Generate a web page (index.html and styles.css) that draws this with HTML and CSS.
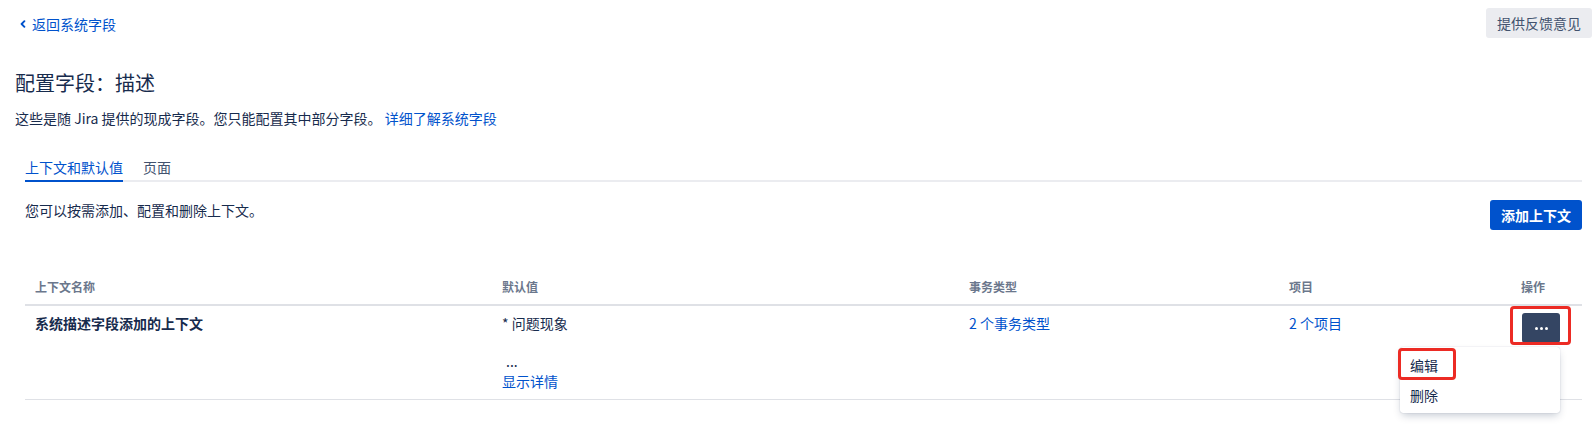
FILE: index.html
```html
<!DOCTYPE html>
<html lang="zh-CN">
<head>
<meta charset="utf-8">
<title>配置字段：描述</title>
<link rel="stylesheet" href="styles.css">
</head>
<body>
<div class="topbar">
  <a class="back-link" href="#"><svg class="chev" width="6" height="8" viewBox="0 0 6 8"><path d="M4.4 1.2 L1.6 4 L4.4 6.8" fill="none" stroke="currentColor" stroke-width="1.9" stroke-linecap="round" stroke-linejoin="round"/></svg>返回系统字段</a>
  <button class="btn btn-subtle" type="button">提供反馈意见</button>
</div>
<div class="header">
  <h1 class="title">配置字段：描述</h1>
  <p class="desc">这些是随 Jira 提供的现成字段。您只能配置其中部分字段。 <a class="link" href="#">详细了解系统字段</a></p>
</div>
<div class="content">
  <div class="tabs">
    <span class="tab tab-active">上下文和默认值</span>
    <span class="tab">页面</span>
  </div>
  <div class="panel-head">
    <p class="panel-desc">您可以按需添加、配置和删除上下文。</p>
    <button class="btn btn-primary" type="button">添加上下文</button>
  </div>
  <table class="ctx-table">
    <colgroup>
      <col class="col-name">
      <col class="col-default">
      <col class="col-types">
      <col class="col-projects">
      <col class="col-ops">
    </colgroup>
    <thead>
      <tr>
        <th>上下文名称</th>
        <th>默认值</th>
        <th>事务类型</th>
        <th>项目</th>
        <th>操作</th>
      </tr>
    </thead>
    <tbody>
      <tr>
        <td class="ctx-name">系统描述字段添加的上下文</td>
        <td>
          <div class="line">* 问题现象</div>
          <div class="line ellipsis">...</div>
          <div class="line"><a class="link" href="#">显示详情</a></div>
        </td>
        <td><a class="link" href="#">2 个事务类型</a></td>
        <td><a class="link" href="#">2 个项目</a></td>
        <td class="ops-cell">
          <div class="ops-wrap">
            <button class="ops-btn" type="button" aria-label="更多操作"><svg width="13" height="3" viewBox="0 0 13 3"><circle cx="1.5" cy="1.5" r="1.5" fill="#fff"/><circle cx="6.5" cy="1.5" r="1.5" fill="#fff"/><circle cx="11.5" cy="1.5" r="1.5" fill="#fff"/></svg></button>
            <span class="mark mark-ops"></span>
            <div class="dropdown">
              <div class="dd-item">编辑</div>
              <div class="dd-item">删除</div>
              <span class="mark mark-edit"></span>
            </div>
          </div>
        </td>
      </tr>
    </tbody>
  </table>
</div>
</body>
</html>
```

FILE: styles.css
```css
* {
  box-sizing: border-box;
}

html,
body {
  min-height: 427px;
}

body {
  margin: 0;
  padding-bottom: 27px;
  font-family: "Noto Sans CJK SC", "Noto Sans", sans-serif;
  font-size: 14px;
  line-height: 20px;
  color: #172b4d;
  background: #fff;
}

a {
  text-decoration: none;
}

.link {
  color: #0052cc;
}

.topbar {
  display: flex;
  justify-content: space-between;
  align-items: center;
  height: 38px;
  padding: 8px 1px 0 20px;
}

.back-link {
  display: flex;
  align-items: center;
  color: #0052cc;
  font-size: 14px;
  line-height: 20px;
  padding-top: 1px;
}

.chev {
  margin-right: 6px;
  display: block;
}

.btn {
  font-family: inherit;
  font-size: 14px;
  height: 30px;
  line-height: 30px;
  padding: 0 11px;
  border: none;
  border-radius: 3px;
  cursor: pointer;
}

.btn-subtle {
  background: #ebecf0;
  color: #42526e;
}

.btn-primary {
  background: #0052cc;
  color: #fff;
  font-weight: 700;
}

.header {
  padding-left: 15px;
}

.title {
  margin: 31px 0 0;
  font-size: 20px;
  line-height: 28px;
  font-weight: 400;
  color: #172b4d;
}

.desc {
  margin: 11px 0 0;
  color: #172b4d;
}

.content {
  margin: 0 11px 0 25px;
}

.tabs {
  display: flex;
  gap: 20px;
  margin-top: 29px;
  box-shadow: inset 0 -2px 0 #ebecf0;
}

.tab {
  padding-bottom: 3px;
  border-bottom: 2px solid transparent;
  color: #42526e;
}

.tab-active {
  color: #0052cc;
  border-bottom-color: #0052cc;
}

.panel-head {
  display: flex;
  justify-content: space-between;
  align-items: flex-start;
  margin-top: 18px;
}

.panel-desc {
  margin: 0;
}

.ctx-table {
  width: 100%;
  margin-top: 40px;
  border-collapse: collapse;
  table-layout: fixed;
}

.col-name { width: 467px; }
.col-default { width: 467px; }
.col-types { width: 320px; }
.col-projects { width: 232px; }
.col-ops { width: 71px; }

.ctx-table th {
  text-align: left;
  font-size: 12px;
  line-height: 18px;
  font-weight: 600;
  color: #6b778c;
  padding: 8px 10px;
  border-bottom: 2px solid #dfe1e6;
}

.ctx-table td {
  vertical-align: top;
  padding: 7px 10px 8px;
  border-bottom: 1px solid #dfe1e6;
}

.ctx-name {
  font-weight: 700;
}

.ellipsis {
  margin-top: 18px;
  padding-left: 4px;
}

.ops-cell {
  padding-top: 7px;
}

.ops-wrap {
  position: relative;
  display: inline-block;
  margin-left: 1px;
  vertical-align: top;
}

.ops-btn {
  display: flex;
  align-items: center;
  justify-content: center;
  width: 38px;
  height: 30px;
  padding: 0;
  border: none;
  border-radius: 3px;
  background: #344563;
  cursor: pointer;
}

.ops-btn svg {
  display: block;
}

.mark {
  position: absolute;
  border: 3px solid #ec2b24;
  border-radius: 4px;
  pointer-events: none;
}

.mark-ops {
  top: -7px;
  left: -12px;
  right: -11px;
  bottom: -2px;
}

.dropdown {
  position: absolute;
  top: 34px;
  right: 0;
  width: 160px;
  padding: 3px 0;
  background: #fff;
  border-radius: 3px;
  box-shadow: 0 4px 8px -2px rgba(9, 30, 66, 0.25), 0 0 1px rgba(9, 30, 66, 0.31);
  z-index: 2;
}

.dd-item {
  height: 30px;
  line-height: 30px;
  padding: 0 10px;
  color: #172b4d;
}

.mark-edit {
  top: 1px;
  left: -2px;
  width: 58px;
  height: 32px;
}
```
